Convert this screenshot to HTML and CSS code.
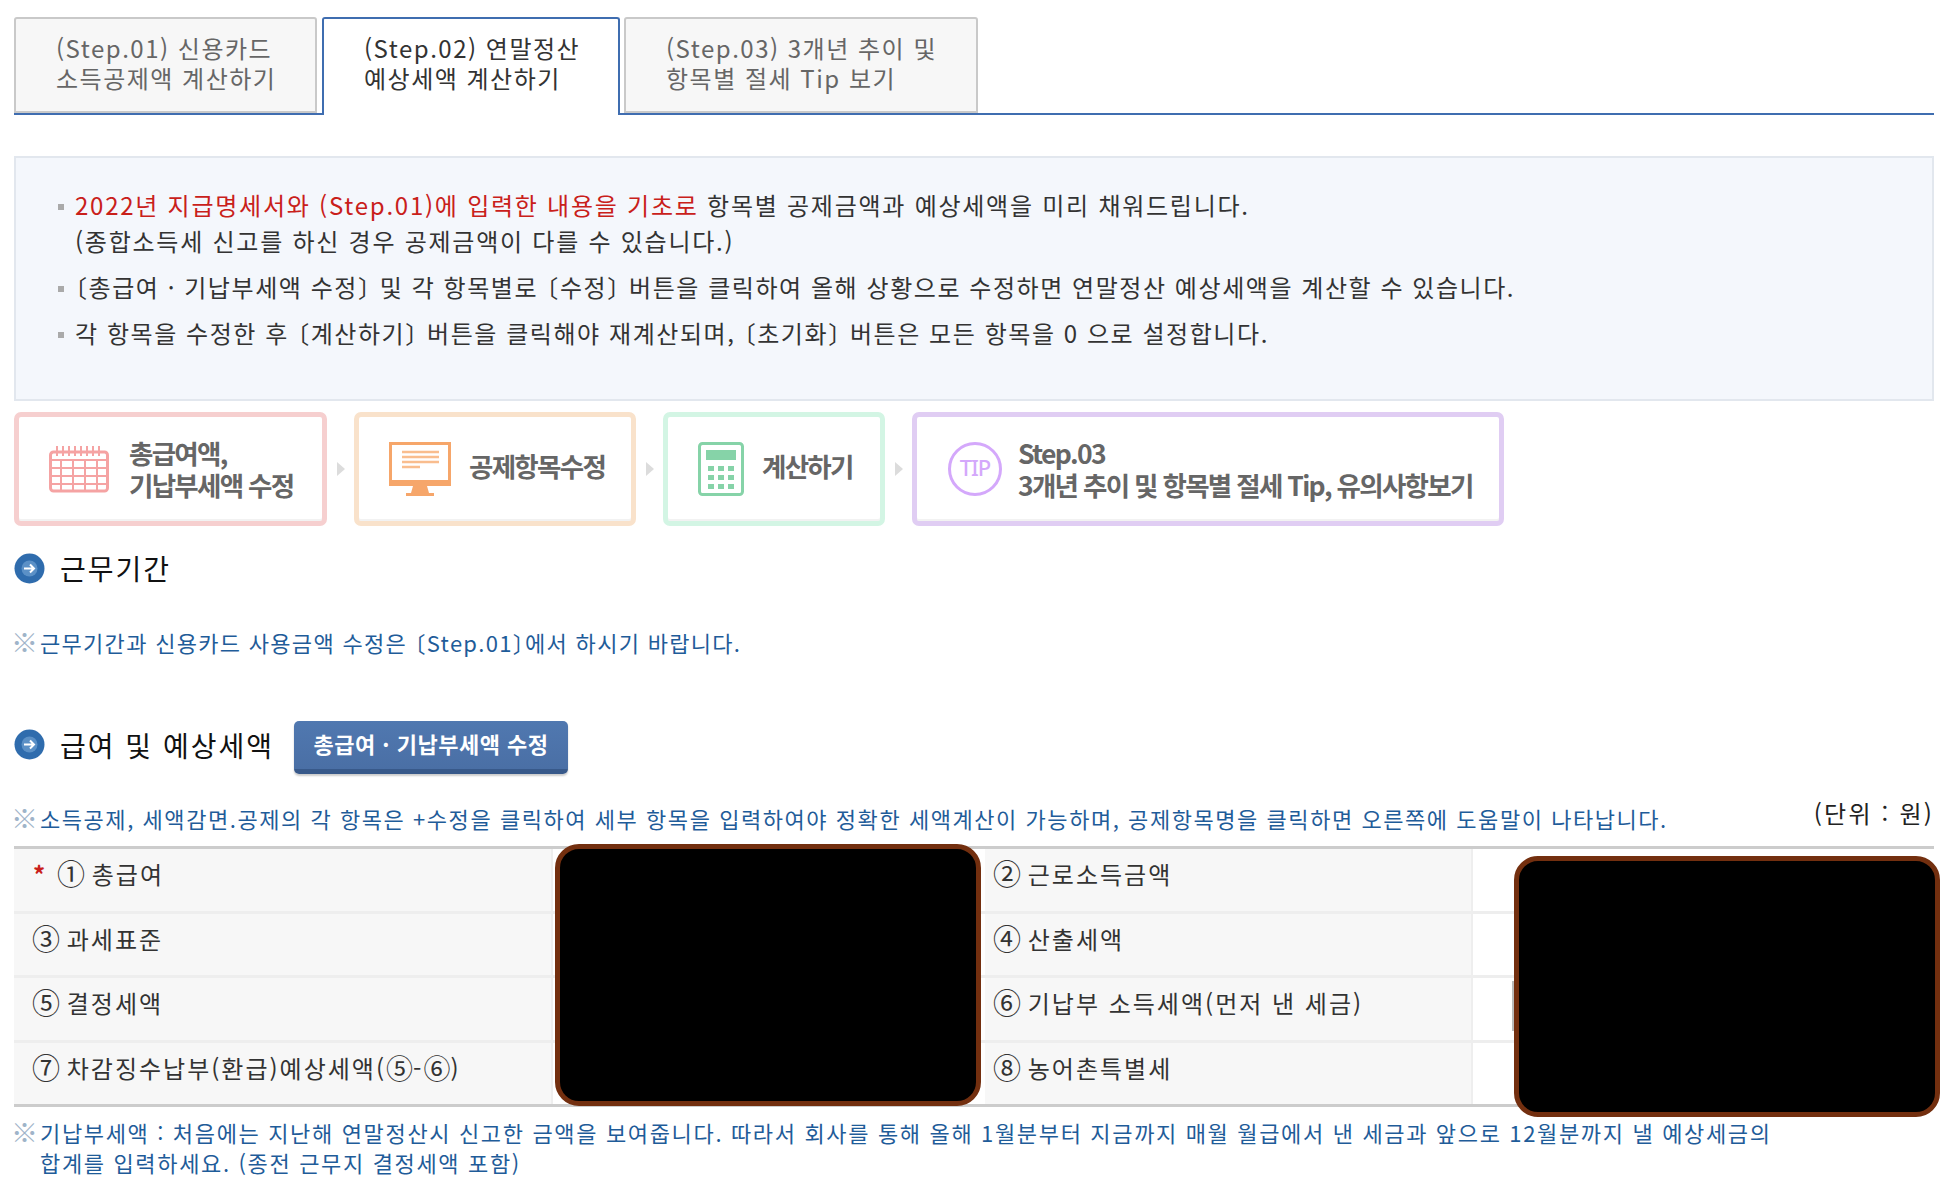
FILE: index.html
```html
<!DOCTYPE html>
<html lang="ko">
<head>
<meta charset="utf-8">
<title>연말정산 예상세액 계산하기</title>
<link rel="stylesheet" href="styles.css">
</head>
<body>
<div class="page">
  <nav class="tabs">
    <a class="tab tab-1">(Step.01) 신용카드<br>소득공제액 계산하기</a>
    <a class="tab tab-2">(Step.02) 연말정산<br>예상세액 계산하기</a>
    <a class="tab tab-3">(Step.03) 3개년 추이 및<br>항목별 절세 Tip 보기</a>
  </nav>

  <section class="guide">
    <ul>
      <li class="li-first"><span class="red">2022년 지급명세서와 (Step.01)에 입력한 내용을 기초로</span> 항목별 공제금액과 예상세액을 미리 채워드립니다.<br>(종합소득세 신고를 하신 경우 공제금액이 다를 수 있습니다.)</li>
      <li><span class="brk">〔</span>총급여 · 기납부세액 수정<span class="brk">〕</span> 및 각 항목별로 <span class="brk">〔</span>수정<span class="brk">〕</span> 버튼을 클릭하여 올해 상황으로 수정하면 연말정산 예상세액을 계산할 수 있습니다.</li>
      <li>각 항목을 수정한 후 <span class="brk">〔</span>계산하기<span class="brk">〕</span> 버튼을 클릭해야 재계산되며, <span class="brk">〔</span>초기화<span class="brk">〕</span> 버튼은 모든 항목을 0 으로 설정합니다.</li>
    </ul>
  </section>

  <div class="steps">
    <div class="step step-pink">
      <svg class="ico" width="60" height="48" viewBox="0 0 60 48">
        <rect x="1.5" y="7" width="57" height="39" rx="3" fill="none" stroke="#f5a3a3" stroke-width="3"/>
        <path d="M2 15h56M2 23h56M2 31h56M2 39h56M12 15v31M24 15v31M36 15v31M48 15v31" stroke="#f5a3a3" stroke-width="2" fill="none"/>
        <path d="M8 1v10M14 1v10M20 1v10M26 1v10M32 1v10M38 1v10M44 1v10M50 1v10" stroke="#f5a3a3" stroke-width="2"/>
      </svg>
      <span class="step-text">총급여액,<br>기납부세액 수정</span>
    </div>
    <svg class="arr" width="10" height="16" viewBox="0 0 10 16"><path d="M1 1l8 7-8 7z" fill="#dcdcdc"/></svg>
    <div class="step step-orange">
      <svg class="ico" width="62" height="54" viewBox="0 0 62 54">
        <rect x="1.5" y="1.5" width="59" height="41" fill="#fff" stroke="#f6a66a" stroke-width="3"/>
        <rect x="0" y="38" width="62" height="6" fill="#f6a66a"/>
        <path d="M24 44h14l2 7h5v3H17v-3h5z" fill="#f6a66a"/>
        <path d="M13 10h37M13 15h37M13 20h37M13 25h18" stroke="#f9bd8e" stroke-width="2.5"/>
      </svg>
      <span class="step-text step-single">공제항목수정</span>
    </div>
    <svg class="arr" width="10" height="16" viewBox="0 0 10 16"><path d="M1 1l8 7-8 7z" fill="#dcdcdc"/></svg>
    <div class="step step-green">
      <svg class="ico" width="46" height="54" viewBox="0 0 46 54">
        <rect x="1.5" y="1.5" width="43" height="51" rx="3" fill="none" stroke="#86d3a8" stroke-width="3"/>
        <rect x="8" y="8" width="30" height="10" fill="#86d3a8"/>
        <path d="M10 24h6v5h-6zM20 24h6v5h-6zM30 24h6v5h-6zM10 33h6v5h-6zM20 33h6v5h-6zM30 33h6v5h-6zM10 42h6v5h-6zM20 42h6v5h-6zM30 42h6v5h-6z" fill="#86d3a8"/>
      </svg>
      <span class="step-text step-single">계산하기</span>
    </div>
    <svg class="arr" width="10" height="16" viewBox="0 0 10 16"><path d="M1 1l8 7-8 7z" fill="#dcdcdc"/></svg>
    <div class="step step-purple">
      <svg class="ico" width="56" height="56" viewBox="0 0 56 56">
        <circle cx="28" cy="28" r="25.5" fill="none" stroke="#d4a8fb" stroke-width="3"/>
        <text x="28" y="35" text-anchor="middle" class="tip-text">TIP</text>
      </svg>
      <span class="step-text">Step.03<br>3개년 추이 및 항목별 절세 Tip, 유의사항보기</span>
    </div>
  </div>

  <h2 class="heading heading-first">
    <svg class="bullet" width="31" height="31" viewBox="0 0 31 31">
      <circle cx="15.5" cy="15.5" r="15" fill="#2f6cad"/>
      <circle cx="15.5" cy="15.5" r="8" fill="#5b90c6"/>
      <path d="M10 15.5h10M16 11.5l4 4-4 4" stroke="#fff" stroke-width="2" fill="none"/>
    </svg>
    <span>근무기간</span>
  </h2>
  <p class="note note-work"><span class="mark">※</span>근무기간과 신용카드 사용금액 수정은 <span class="brk">〔</span>Step.01<span class="brk">〕</span>에서 하시기 바랍니다.</p>

  <div class="heading-row">
    <h2 class="heading heading-second">
      <svg class="bullet" width="31" height="31" viewBox="0 0 31 31">
        <circle cx="15.5" cy="15.5" r="15" fill="#2f6cad"/>
        <circle cx="15.5" cy="15.5" r="8" fill="#5b90c6"/>
        <path d="M10 15.5h10M16 11.5l4 4-4 4" stroke="#fff" stroke-width="2" fill="none"/>
      </svg>
      <span>급여 및 예상세액</span>
    </h2>
    <button class="edit-btn" type="button">총급여 · 기납부세액 수정</button>
  </div>

  <div class="note-row">
    <p class="note"><span class="mark">※</span>소득공제, 세액감면.공제의 각 항목은 +수정을 클릭하여 세부 항목을 입력하여야 정확한 세액계산이 가능하며, 공제항목명을 클릭하면 오른쪽에 도움말이 나타납니다.</p>
    <span class="unit">(단위 : 원)</span>
  </div>

  <div class="table-wrap">
    <table class="tax">
      <colgroup><col class="c1"><col class="c2"><col class="c3"><col class="c4"></colgroup>
      <tr><th><span class="star">*</span><span class="num">①</span> 총급여</th><td></td><th><span class="num">②</span> 근로소득금액</th><td></td></tr>
      <tr><th><span class="num">③</span> 과세표준</th><td></td><th><span class="num">④</span> 산출세액</th><td></td></tr>
      <tr><th><span class="num">⑤</span> 결정세액</th><td></td><th><span class="num">⑥</span> 기납부 소득세액(먼저 낸 세금)</th><td></td></tr>
      <tr><th><span class="num">⑦</span> 차감징수납부(환급)예상세액(<span class="num-in">⑤</span>-<span class="num-in">⑥</span>)</th><td></td><th><span class="num">⑧</span> 농어촌특별세</th><td></td></tr>
    </table>
    <div class="redact redact-a"></div>
    <div class="sliver"></div>
    <div class="redact redact-b"></div>
  </div>

  <p class="note note-last"><span class="mark">※</span>기납부세액 : 처음에는 지난해 연말정산시 신고한 금액을 보여줍니다. 따라서 회사를 통해 올해 1월분부터 지금까지 매월 월급에서 낸 세금과 앞으로 12월분까지 낼 예상세금의<br>합계를 입력하세요. (종전 근무지 결정세액 포함)</p>
</div>
</body>
</html>
```

FILE: styles.css
```css
* { box-sizing: border-box; }
html, body { margin: 0; padding: 0; background: #fff; }
body {
  font-family: "Noto Sans CJK KR", "Noto Sans", sans-serif;
  color: #333;
  overflow: hidden;
}
.page { width: 1948px; padding: 17px 14px 0; }

.tabs {
  display: flex;
  align-items: flex-start;
  height: 98px;
  border-bottom: 2px solid #3f6db0;
  width: 1920px;
}
.tab {
  display: block;
  height: 96px;
  margin-right: 5px;
  padding: 14px 0 0 40px;
  font-size: 24px;
  line-height: 30px;
  letter-spacing: 1.5px;
  color: #666;
  background: #f7f7f7;
  border: 2px solid #c9c9c9;
  border-radius: 3px 3px 0 0;
}
.tab-1 { width: 303px; }
.tab-2 {
  width: 298px;
  height: 98px;
  margin-right: 4px;
  color: #333;
  background: #fff;
  border: 2px solid #3f6db0;
  border-bottom: 0;
}
.tab-3 { width: 354px; }

.guide {
  margin-top: 41px;
  width: 1920px;
  height: 245px;
  padding: 29px 0 0 42px;
  background: #f4f7fc;
  border: 2px solid #e2e7ee;
}
.guide ul { margin: 0; padding: 0; list-style: none; }
.guide li {
  position: relative;
  padding-left: 17px;
  margin-bottom: 10px;
  font-size: 24px;
  line-height: 36px;
  letter-spacing: 1.55px;
  color: #333;
}
.guide .li-first { letter-spacing: 1.75px; }
.guide li::before {
  content: "";
  position: absolute;
  left: 0;
  top: 17px;
  width: 6px;
  height: 6px;
  background: #aaa;
}
.red { color: #c9201a; }
.brk { font-feature-settings: "halt"; }

.steps { display: flex; align-items: center; margin-top: 11px; height: 114px; }
.step {
  display: flex;
  align-items: center;
  height: 114px;
  border: 5px solid;
  border-radius: 7px;
  background: #fff;
  box-shadow: inset 0 -2px 0 rgba(0, 0, 0, 0.05);
  color: #666;
}
.step-pink { width: 313px; border-color: #f6cfcf; padding-left: 30px; gap: 20px; }
.step-orange { width: 282px; border-color: #f9e2cb; padding-left: 30px; gap: 18px; }
.step-green { width: 222px; border-color: #d3f5e4; padding-left: 30px; gap: 18px; }
.step-purple { width: 592px; border-color: #e0cdf3; padding-left: 30px; gap: 15px; }
.step-text { font-size: 26.5px; line-height: 32px; letter-spacing: -1.7px; font-weight: 700; }
.step-single { padding-bottom: 6px; }
.arr { margin: 0 6px 0 7px; flex: none; width: 14px; }
.tip-text { font-size: 22px; font-weight: 500; fill: #d4a8fb; letter-spacing: -1px; font-family: "Noto Sans", sans-serif; }

.heading {
  display: flex;
  align-items: center;
  gap: 15px;
  margin: 0;
  font-size: 28px;
  line-height: 40px;
  letter-spacing: 2px;
  font-weight: 400;
  color: #111;
}
.heading-first { margin-top: 22px; }
.heading-second { padding-bottom: 6px; }
.bullet { flex: none; }

.note { margin: 0; font-size: 22px; line-height: 30px; letter-spacing: 1.55px; color: #1f5c99; }
.mark {
  display: inline-block;
  width: 27px;
  margin-left: -3px;
  margin-right: 2px;
  font-size: 27px;
  line-height: 0;
  letter-spacing: 0;
  text-indent: 0;
  color: #9fb4c9;
  vertical-align: -1px;
}
.note-work { margin-top: 39px; letter-spacing: 1.3px; }

.heading-row { display: flex; align-items: center; gap: 20px; margin-top: 64px; height: 53px; }
.edit-btn {
  width: 274px;
  height: 53px;
  padding: 0 0 4px;
  border: 0;
  border-bottom: 5px solid #38598a;
  border-radius: 5px;
  background: linear-gradient(#5078b0, #4a6fa5);
  box-shadow: 0 2px 2px #ccc;
  color: #fff;
  font-family: inherit;
  font-size: 22px;
  font-weight: 700;
  letter-spacing: 0.5px;
}

.note-row { display: flex; justify-content: space-between; align-items: flex-start; width: 1920px; margin-top: 29px; }
.unit { font-size: 24px; line-height: 30px; letter-spacing: 2.2px; color: #222; margin-top: -5px; }

.table-wrap { position: relative; width: 1920px; margin-top: 13px; }
.tax { width: 1920px; border-collapse: collapse; table-layout: fixed; border-top: 3px solid #ccc; border-bottom: 3px solid #ccc; }
.c1 { width: 538px; }
.c2 { width: 433px; }
.c3 { width: 487px; }
.c4 { width: 462px; }
.tax th, .tax td { height: 64.5px; border-bottom: 3px solid #eee; padding: 0; }
.tax tr:last-child th, .tax tr:last-child td { border-bottom: 0; }
.tax th {
  padding: 0 0 11px 19px;
  background: #f7f7f7;
  border-right: 2px solid #eee;
  font-size: 24px;
  line-height: 32px;
  font-weight: 400;
  letter-spacing: 2px;
  text-align: left;
  color: #333;
}
.tax th:nth-child(3) { padding-left: 9px; }
.tax td { background: #fff; }
.num { font-size: 28px; line-height: 0; letter-spacing: 0; margin-left: -1px; margin-right: -2px; vertical-align: -1px; }
.num-in { font-size: 27px; line-height: 0; letter-spacing: 0; vertical-align: -1px; }
.star { display: inline-block; width: 25px; color: #c9201a; font-weight: 700; letter-spacing: 0; }

.redact {
  position: absolute;
  background: #000;
  border: 5px solid #732f0f;
  border-radius: 24px;
}
.redact-a { left: 541px; top: -2px; width: 426px; height: 262px; }
.redact-b { left: 1500px; top: 10px; width: 426px; height: 261px; }
.sliver { position: absolute; left: 1498px; top: 135px; width: 2px; height: 50px; background: #bbb; }

.note-last { margin-top: 10px; padding-left: 26px; text-indent: -26px; letter-spacing: 1.65px; }
```
